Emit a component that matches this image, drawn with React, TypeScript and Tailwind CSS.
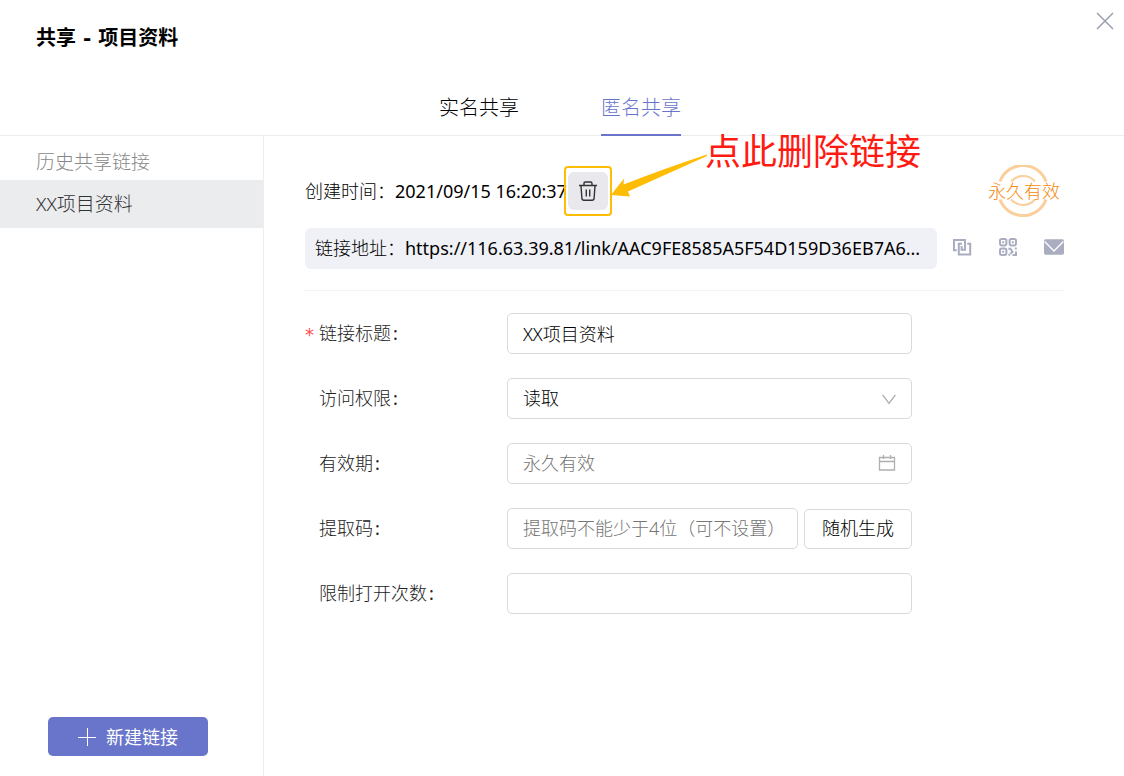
import { useState } from "react";

const history = ["XX项目资料"];

const fieldClass =
  "h-[41px] w-full min-w-0 rounded-[5px] border border-[#d9d9d9] bg-white px-[15px] pb-[2px] text-lg font-light text-black placeholder:text-[#757575] focus:border-[#6875cb] focus:outline-none";

function CloseIcon() {
  return (
    <svg width="18" height="18" viewBox="0 0 18 18" fill="none" stroke="#9a9fb0" strokeWidth="1.5">
      <path d="M1 1l16 16M17 1L1 17" />
    </svg>
  );
}

function TrashIcon() {
  return (
    <svg width="18" height="20" viewBox="0 0 18 20" fill="none" stroke="#333" strokeWidth="1.4">
      <path d="M0 4.500h18M5 4.300V2.400Q5 1 6.400 1h5.200Q13 1 13 2.400v1.900" />
      <path d="M2 4.800l.9 12.400q.1 2 2.100 2h8q2 0 2.100-2L16 4.800M7.300 8.500v7M10.700 8.500v7" />
    </svg>
  );
}

function CopyIcon() {
  return (
    <svg width="20" height="18" viewBox="0 0 20 18" fill="none" stroke="#a9adbf" strokeWidth="2">
      <path d="M4.800 12.200H2V2h11v9.800H9.600V8" />
      <path d="M10 5.800H6.800v10.600h11.400V5.800H15.200" />
    </svg>
  );
}

function QrIcon() {
  return (
    <svg width="18" height="18" viewBox="0 0 18 18" fill="none" stroke="#a9adbf" strokeWidth="2">
      <rect x="1" y="1" width="6.400" height="6.400" rx="1.800" />
      <rect x="10.600" y="1" width="6.400" height="6.400" rx="1.800" />
      <rect x="1" y="10.600" width="6.400" height="6.400" rx="1.800" />
      <path d="M3.200 4.200h2M12.800 4.200h2M3.200 13.800h2" />
      <path d="M9.400 10.800h2l2 3-2 2M16.800 9.600v2M17 13.500V17h-3.500M9.400 16.800h1.800" />
    </svg>
  );
}

function MailIcon() {
  return (
    <svg width="20" height="16" viewBox="0 0 20 16">
      <rect width="20" height="15.400" y=".3" rx="1.600" fill="#a9adbf" />
      <path d="M.6 2.500l9.400 9.500L19.400 2.500" fill="none" stroke="#fff" strokeWidth="1.300" />
    </svg>
  );
}

function Stamp() {
  return (
    <div className="relative mr-1 flex h-[52px] w-[72px] items-center justify-center">
      <svg className="absolute inset-0" width="72" height="52" viewBox="0 0 72 52" fill="none" stroke="#fbcf9c">
        <path d="M12 16.500a24.500 24.500 0 0 1 46 0M12 34.500a24.500 24.500 0 0 0 46 0" strokeWidth="3" />
        <path d="M23 16.500a16 16 0 0 1 24 0M23 34.500a16 16 0 0 0 24 0" strokeWidth="2" />
      </svg>
      <span className="relative text-lg font-light whitespace-nowrap text-[#f58a0d]">永久有效</span>
    </div>
  );
}

function Field({
  id,
  label,
  required,
  children,
}: {
  id: string;
  label: string;
  required?: boolean;
  children: React.ReactNode;
}) {
  return (
    <div className="flex items-center">
      <label htmlFor={id} className="flex w-[202px] shrink-0 items-center pb-[2px] text-lg font-light text-[#222]">
        <span className="w-[14px] shrink-0 pt-1 font-['DejaVu_Sans'] font-normal text-[#ff4d4f]">
          {required ? "*" : ""}
        </span>
        {label}
        <span className="ml-[2px] font-normal">:</span>
      </label>
      <div className="flex w-[405px] min-w-0 items-center gap-[6px]">{children}</div>
    </div>
  );
}

export default function ShareDialog() {
  const [tab, setTab] = useState("anonymous");
  const [title, setTitle] = useState("XX项目资料");
  const [code, setCode] = useState("");

  const randomCode = () => setCode(Math.random().toString(36).slice(2, 8));

  return (
    <div className="flex min-h-screen flex-col bg-white font-['Noto_Sans','Noto_Sans_CJK_SC',sans-serif] text-black">
      {/* Header */}
      <header className="flex h-[136px] flex-col justify-between border-b border-[#ededed]">
        <div className="flex items-start justify-between pt-3 pr-[10px] pl-9">
          <h1 className="pt-3 text-xl leading-7 font-bold">
            共享<span className="font-['DejaVu_Sans'] whitespace-pre"> - </span>项目资料
          </h1>
          <button type="button" aria-label="关闭">
            <CloseIcon />
          </button>
        </div>
        <nav className="-mb-px flex justify-center gap-[82px] pr-1 text-xl font-light">
          <button
            type="button"
            onClick={() => setTab("named")}
            className={`h-[58px] border-b-2 pt-1 ${tab === "named" ? "border-[#6875cb] text-[#6875cb]" : "border-transparent"}`}
          >
            实名共享
          </button>
          <button
            type="button"
            onClick={() => setTab("anonymous")}
            className={`h-[58px] border-b-2 pt-1 ${tab === "anonymous" ? "border-[#6875cb] text-[#6875cb]" : "border-transparent"}`}
          >
            匿名共享
          </button>
        </nav>
      </header>

      <div className="flex flex-1">
        {/* Sidebar */}
        <aside className="flex w-[264px] shrink-0 flex-col border-r border-[#ededed]">
          <h2 className="flex h-11 items-center pt-2 pl-9 text-[19px] font-light text-[#888]">历史共享链接</h2>
          {history.map((item) => (
            <button
              key={item}
              type="button"
              className="h-12 bg-[#ebecee] pl-9 text-left text-[19px] font-light text-[#333]"
            >
              {item}
            </button>
          ))}
          <button
            type="button"
            className="mx-12 mt-auto mb-5 flex h-[39px] w-40 items-center justify-center gap-[10px] rounded-[5px] bg-[#6875cb] text-lg text-white"
          >
            <svg width="18" height="18" viewBox="0 0 18 18" stroke="#fff" strokeWidth="1">
              <path d="M0 9.500h18M9.500 0v18" />
            </svg>
            新建链接
          </button>
        </aside>

        {/* Link details */}
        <main className="min-w-0 flex-1 pt-[29px] pr-[60px] pl-[41px]">
          <div className="flex h-[52px] items-center justify-between">
            <div className="flex items-center text-lg font-light whitespace-nowrap">
              创建时间：
              <span className="font-normal">2021/09/15 16:20:37</span>
              <div className="relative ml-px">
                <button
                  type="button"
                  aria-label="删除链接"
                  className="flex h-[38px] w-10 items-center justify-center rounded-md bg-[#e8e8ed]"
                >
                  <TrashIcon />
                </button>
                <div className="pointer-events-none absolute -inset-x-1 -inset-y-[6px] rounded-[4px] border-2 border-[#ffbc05]" />
                <svg
                  className="pointer-events-none absolute -top-[18px] left-[43px]"
                  width="98"
                  height="46"
                  viewBox="0 0 98 46"
                  fill="#ffbc05"
                >
                  <path d="M0 41L13 24.500L12.500 30.500Q55 14 96 0.500V2Q56 20 17 37.500L19 42.500Z" />
                </svg>
                <p className="pointer-events-none absolute -top-[46px] left-[137px] text-4xl leading-[52px] font-normal text-[#ff1a12]">
                  点此删除链接
                </p>
              </div>
            </div>
            <Stamp />
          </div>

          <div className="mt-[11px] flex items-center">
            <div className="flex h-[41px] min-w-0 flex-1 items-center rounded-md bg-[#f0f1f7] px-[10px] pb-[2px] text-lg font-light whitespace-nowrap">
              链接地址：
              <span className="truncate font-normal">https://116.63.39.81/link/AAC9FE8585A5F54D159D36EB7A6...</span>
            </div>
            <div className="ml-[15px] flex items-center gap-[27px] pb-[3px]">
              <button type="button" aria-label="复制链接">
                <CopyIcon />
              </button>
              <button type="button" aria-label="二维码">
                <QrIcon />
              </button>
              <button type="button" aria-label="发送邮件">
                <MailIcon />
              </button>
            </div>
          </div>

          <hr className="mt-[21px] border-t border-dotted border-[#e8e8e8]" />

          <form className="mt-[22px] flex flex-col gap-6" onSubmit={(e) => e.preventDefault()}>
            <Field id="title" label="链接标题" required>
              <input id="title" type="text" value={title} onChange={(e) => setTitle(e.target.value)} className={fieldClass} />
            </Field>
            <Field id="access" label="访问权限">
              <div className="relative w-full">
                <select id="access" className={`${fieldClass} appearance-none`}>
                  <option>读取</option>
                </select>
                <svg
                  className="pointer-events-none absolute top-4 right-4"
                  width="14"
                  height="11"
                  viewBox="0 0 14 11"
                  fill="none"
                  stroke="#b0b0b0"
                  strokeWidth="1.4"
                >
                  <path d="M.6.8L7 9.400L13.400.8" />
                </svg>
              </div>
            </Field>
            <Field id="expires" label="有效期">
              <div className="relative w-full">
                <input id="expires" type="text" placeholder="永久有效" className={fieldClass} />
                <svg
                  className="pointer-events-none absolute top-3 right-4"
                  width="18"
                  height="16"
                  viewBox="0 0 18 16"
                  fill="none"
                  stroke="#b0b0b0"
                  strokeWidth="1.3"
                >
                  <path d="M1.500 2.500h15v12.500h-15zM1.500 6.500h15M5.500 0v4M12.500 0v4" />
                </svg>
              </div>
            </Field>
            <Field id="code" label="提取码">
              <input
                id="code"
                type="text"
                value={code}
                onChange={(e) => setCode(e.target.value)}
                placeholder="提取码不能少于4位（可不设置）"
                className={fieldClass}
              />
              <button
                type="button"
                onClick={randomCode}
                className="h-10 w-[108px] shrink-0 rounded-[5px] border border-[#d9d9d9] bg-white pb-[2px] text-lg font-light"
              >
                随机生成
              </button>
            </Field>
            <Field id="limit" label="限制打开次数">
              <input id="limit" type="text" className={fieldClass} />
            </Field>
          </form>
        </main>
      </div>
    </div>
  );
}
